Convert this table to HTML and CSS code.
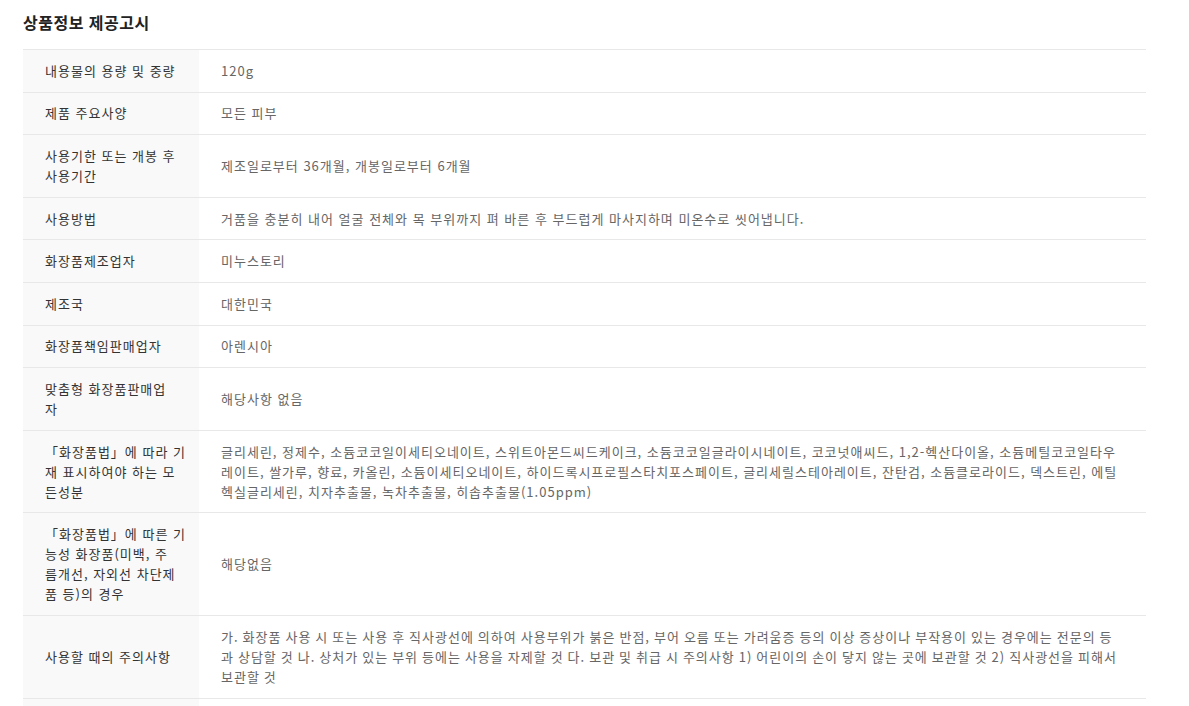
FILE: index.html
```html
<!DOCTYPE html>
<html lang="ko">
<head>
<meta charset="utf-8">
<title>상품정보 제공고시</title>
<link rel="stylesheet" href="styles.css">
</head>
<body>
<section class="notice">
  <h2 class="notice-title">상품정보 제공고시</h2>
  <table class="info-table">
    <colgroup><col class="col-label"><col class="col-value"></colgroup>
    <tbody>
      <tr><th>내용물의 용량 및 중량</th><td>120g</td></tr>
      <tr><th>제품 주요사양</th><td>모든 피부</td></tr>
      <tr><th>사용기한 또는 개봉 후<br>사용기간</th><td>제조일로부터 36개월, 개봉일로부터 6개월</td></tr>
      <tr><th>사용방법</th><td>거품을 충분히 내어 얼굴 전체와 목 부위까지 펴 바른 후 부드럽게 마사지하며 미온수로 씻어냅니다.</td></tr>
      <tr><th>화장품제조업자</th><td>미누스토리</td></tr>
      <tr><th>제조국</th><td>대한민국</td></tr>
      <tr><th>화장품책임판매업자</th><td>아렌시아</td></tr>
      <tr><th>맞춤형 화장품판매업<br>자</th><td>해당사항 없음</td></tr>
      <tr><th>「화장품법」에 따라 기<br>재 표시하여야 하는 모<br>든성분</th><td>글리세린, 정제수, 소듐코코일이세티오네이트, 스위트아몬드씨드케이크, 소듐코코일글라이시네이트, 코코넛애씨드, 1,2-헥산다이올, 소듐메틸코코일타우레이트, 쌀가루, 향료, 카올린, 소듐이세티오네이트, 하이드록시프로필스타치포스페이트, 글리세릴스테아레이트, 잔탄검, 소듐클로라이드, 덱스트린, 에틸헥실글리세린, 치자추출물, 녹차추출물, 히솝추출물(1.05ppm)</td></tr>
      <tr><th>「화장품법」에 따른 기<br>능성 화장품(미백, 주<br>름개선, 자외선 차단제<br>품 등)의 경우</th><td>해당없음</td></tr>
      <tr><th>사용할 때의 주의사항</th><td class="cell-prose">가. 화장품 사용 시 또는 사용 후 직사광선에 의하여 사용부위가 붉은 반점, 부어 오름 또는 가려움증 등의 이상 증상이나 부작용이 있는 경우에는 전문의 등과 상담할 것 나. 상처가 있는 부위 등에는 사용을 자제할 것 다. 보관 및 취급 시 주의사항 1) 어린이의 손이 닿지 않는 곳에 보관할 것 2) 직사광선을 피해서 보관할 것</td></tr>
      <tr><th>품질보증기준</th><td>공정거래위원회 고시 소비자분쟁해결기준에 의거 보상</td></tr>
    </tbody>
  </table>
</section>
</body>
</html>
```

FILE: styles.css
```css
html, body {
  margin: 0;
  padding: 0;
  background: #fff;
}
body {
  font-family: "Noto Sans CJK KR", "Liberation Sans", sans-serif;
  color: #333;
}
.notice {
  padding: 0 43px 0 23px;
}
.notice-title {
  margin: 0;
  padding: 12px 0 17px;
  font-size: 16px;
  line-height: 20px;
  font-weight: bold;
  letter-spacing: 0.5px;
  color: #222;
}
.info-table {
  width: 100%;
  table-layout: fixed;
  border-collapse: collapse;
  font-size: 13px;
  line-height: 20px;
  letter-spacing: 1px;
}
.col-label {
  width: 176px;
}
.info-table th,
.info-table td {
  border-top: 1px solid #e8e8e8;
  padding: 10.8px 22px;
  text-align: left;
  vertical-align: middle;
}
.info-table th {
  padding-right: 0;
  background: #f9f9f9;
  font-weight: normal;
  white-space: nowrap;
  color: #333;
}
.info-table td {
  color: #666;
}
.info-table .cell-prose {
  word-spacing: -0.65px;
}
```
